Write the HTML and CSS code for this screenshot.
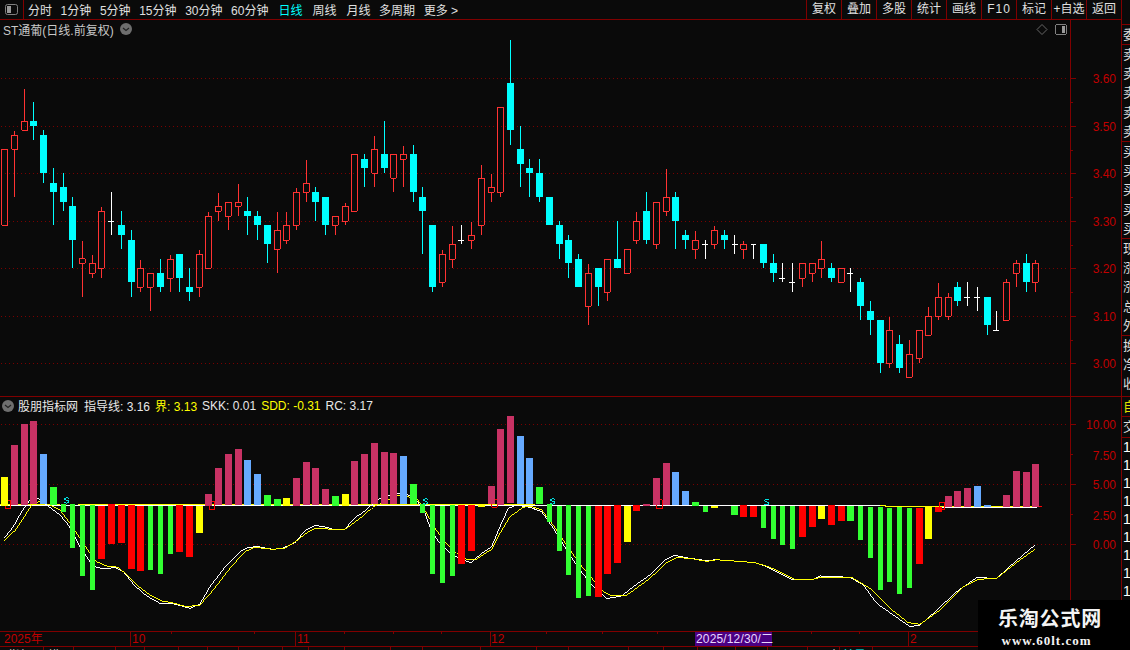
FILE: index.html
```html
<!DOCTYPE html>
<html lang="zh-CN">
<head>
<meta charset="utf-8">
<title>ST通葡</title>
<link rel="stylesheet" href="styles.css">
</head>
<body>
<div class="app">
  <div class="main">
    <header class="toolbar">
      <div class="toggle">
        <svg class="toggle-icon" width="13" height="11" viewBox="0 0 13 11"><rect x="0.5" y="0.5" width="12" height="10" rx="2" class="icon-box"/><rect x="2" y="2" width="4" height="7" class="icon-fill"/></svg>
      </div>
      <nav class="periods">
        <span>分时</span><span>1分钟</span><span>5分钟</span><span>15分钟</span><span>30分钟</span><span>60分钟</span>
        <span class="wide active">日线</span><span class="wide">周线</span><span class="wide">月线</span><span>多周期</span><span>更多 &gt;</span>
      </nav>
      <nav class="actions">
        <span>复权</span><span>叠加</span><span>多股</span><span>统计</span><span>画线</span><span class="spaced">F10</span><span>标记</span><span>+自选</span><span>返回</span>
      </nav>
    </header>

    <section class="panel panel-price">
      <div class="chart-title">
        <span>ST通葡(日线.前复权)</span>
        <svg class="round-icon" width="12" height="12" viewBox="0 0 12 12"><circle cx="6" cy="6" r="6" class="round-bg"/><path d="M3 5l3 2.5L9 5" class="round-mark"/></svg>
      </div>
      <svg class="chart" width="1121" height="376" viewBox="0 20 1121 376">
        <path class="grid" d="M1 78.5H1067M1 126.5H1067M1 173.5H1067M1 221.5H1067M1 268.5H1067M1 316.5H1067M1 363.5H1067"/>
        <path class="axis" d="M1070.5 20V396M1071 78.5h5M1071 126.5h5M1071 173.5h5M1071 221.5h5M1071 268.5h5M1071 316.5h5M1071 363.5h5M1071 102.5h2M1071 150.5h2M1071 197.5h2M1071 245.5h2M1071 292.5h2M1071 340.5h2"/>
        <g class="axis-label">
          <text x="1116" y="83">3.60</text><text x="1116" y="131">3.50</text><text x="1116" y="178">3.40</text><text x="1116" y="226">3.30</text><text x="1116" y="273">3.20</text><text x="1116" y="321">3.10</text><text x="1116" y="368">3.00</text>
        </g>
        <path class="mini-line" d="M1042 24.5l5 5-5 5-5-5z"/>
        <rect x="1055.5" y="24.5" width="11" height="10" rx="2" class="icon-box"/>
        <rect x="1062" y="26" width="3" height="7" class="icon-fill"/>

        <g transform="translate(0.17,40) scale(0.3333)">
          <path class="wick-red" d="M43 274V286M43 328V470M73 148V244M247 603V657M247 670V771M277 645V670M277 700V714M304 502V514M304 685V714M421 660V685M421 742V756M451 742V813M511 645V658M511 715V756M598 630V643M598 742V771M625 516V529M655 459V499M655 514V543M685 529V570M715 432V487M715 499V528M832 516V571M832 628V699M859 516V556M859 601V612M889 444V457M889 556V570M919 360V430M919 457V486M1006 556V585M1036 489V499M1036 544V555"/>
          <path class="body-red" d="M4 328h18V556h-18zM34 286h18V328h-18zM64 244h18V271h-18zM238 657h18V670h-18zM268 670h18V700h-18zM295 514h18V685h-18zM412 685h18V742h-18zM442 700h18V742h-18zM502 658h18V715h-18zM589 643h18V742h-18zM616 529h18V685h-18zM646 499h18V514h-18zM676 487h18V529h-18zM706 487h18V499h-18zM823 571h18V628h-18zM850 556h18V601h-18zM880 457h18V556h-18zM910 430h18V457h-18zM997 529h18V556h-18zM1027 499h18V544h-18zM1054 343h18V514h-18z"/>
          <path class="wick-cyan" d="M100 186V300M130 270V429M160 385V555M190 400V513M217 472V684M364 513V627M394 570V771M481 657V756M538 642V756M568 684V783M742 471V585M772 513V600M802 555V669M946 441V543M976 471V585"/>
          <path class="body-cyan" d="M100 243V258M130 285V399M160 429V456M190 441V486M217 498V600M364 555V585M394 600V726M481 699V741M538 642V714M568 741V756M742 513V528M772 528V555M802 555V612M946 456V486M976 471V555"/>
          <path class="wick-white" d="M334 456V585M325 544h18"/>
        </g>
        <g transform="translate(360.17,30) scale(0.3333)">
          <path class="wick-red" d="M43 318V358M43 430V471M100 445V486M130 348V373M130 388V471M247 660V673M247 757V771M277 588V643M277 688V714M334 576V616M334 631V657M364 405V445M364 586V615M394 432V472M394 487V516M421 487V501M685 702V730M685 829V885M742 787V813M829 546V574M829 631V642M889 643V657M919 417V502M919 544V558M1006 603V631M1006 658V687M1063 588V601M1063 643V657"/>
          <path class="body-red" d="M34 358h18V430h-18zM91 373h18V445h-18zM121 373h18V388h-18zM238 673h18V757h-18zM268 643h18V688h-18zM325 616h18V631h-18zM355 445h18V586h-18zM385 472h18V487h-18zM412 232h18V487h-18zM676 730h18V829h-18zM733 688h18V787h-18zM793 658h18V730h-18zM820 574h18V631h-18zM880 517h18V643h-18zM910 502h18V544h-18zM997 631h18V658h-18zM1054 601h18V643h-18z"/>
          <path class="wick-cyan" d="M13 372V471M73 273V429M160 345V516M187 471V672M217 585V786M451 30V345M481 288V471M508 387V501M538 387V516M598 573V687M625 615V744M655 672V771M715 714V828M772 573V714M859 486V642M946 486V657M976 600V657"/>
          <path class="body-cyan" d="M13 387V414M73 372V414M160 372V486M187 501V543M217 585V771M451 159V300M481 357V402M508 414V429M538 429V501M568 501V585M598 585V642M625 630V699M655 687V771M715 714V771M772 687V714M859 543V630M946 501V573M976 615V630"/>
          <path class="wick-white" d="M304 585V642M295 631h18M1036 630V687M1027 643h18"/>
        </g>
        <g transform="translate(720.17,160) scale(0.3333)">
          <path class="wick-red" d="M70 243V253M70 268V297M247 355V381M277 340V366M304 243V298M304 325V354M508 471V511M508 610V624M568 540V583M598 595V609M625 441V469M655 369V412M655 469V480M685 399V412M685 469V480M859 357V367M889 300V310M889 340V381M946 300V310M946 367V396"/>
          <path class="body-red" d="M61 253h18V268h-18zM238 310h18V355h-18zM268 310h18V340h-18zM295 298h18V325h-18zM355 325h18V367h-18zM499 511h18V610h-18zM559 583h18V652h-18zM589 511h18V595h-18zM616 469h18V526h-18zM646 412h18V469h-18zM676 412h18V469h-18zM850 367h18V481h-18zM880 310h18V340h-18zM937 310h18V367h-18z"/>
          <path class="wick-cyan" d="M13 210V267M130 252V324M160 282V366M334 309V366M421 354V480M451 423V525M481 480V639M538 525V639M712 366V438M802 411V525M919 282V396"/>
          <path class="body-cyan" d="M13 225V240M130 252V309M160 309V339M334 324V354M421 366V438M451 453V480M481 480V609M538 552V624M712 381V423M802 411V495M919 309V366"/>
          <path class="wick-white" d="M43 225V282M34 253h18M100 253V297M91 253h18M187 309V366M178 355h18M217 309V396M208 367h18M391 324V396M382 340h18M742 366V438M733 412h18M772 381V453M763 412h18M829 453V511M820 511h18"/>
        </g>
      </svg>
    </section>

    <section class="panel panel-indicator">
      <div class="legend">
        <svg class="round-icon" width="12" height="12" viewBox="0 0 12 12"><circle cx="6" cy="6" r="6" class="round-bg"/><path d="M3 5l3 2.5L9 5" class="round-mark"/></svg>
        <span class="legend-name">股朋指标网</span>
        <span>指导线: 3.16</span>
        <span class="yellow">界: 3.13</span>
        <span>SKK: 0.01</span>
        <span class="yellow">SDD: -0.31</span>
        <span>RC: 3.17</span>
      </div>
      <svg class="chart" width="1121" height="234" viewBox="0 397 1121 234">
        <path class="grid" d="M1 424.5H1067M1 484.5H1067M1 544.5H1067"/>
        <path class="axis" d="M1070.5 397V631M1071 424.5h5M1071 484.5h5M1071 544.5h5M1071 454.5h2M1071 514.5h2"/>
        <g class="axis-label">
          <text x="1116" y="429">10.00</text><text x="1116" y="460">7.50</text><text x="1116" y="489">5.00</text><text x="1116" y="520">2.50</text><text x="1116" y="549">0.00</text>
        </g>

        <path class="zero-yellow" d="M0 504.5H60M78 504.5H535M700 505.5H885V506.5H1037"/>
        <path class="zero-white" d="M0 505.5H880M940 507.5H1037"/>
        <path class="zero-red" d="M1037 506.5H1042"/>

        <g transform="translate(0,410) scale(0.3333)">
          <polyline class="curve-white" points="12,385 40,350 65,305 90,270 115,265 140,285 180,315 205,345 240,410 270,455 290,472 310,476 345,473 370,485 405,528 440,558 480,580 515,580 545,588 570,595 600,582 630,530 680,465 720,425 745,412 775,410 800,415 820,418 850,414 885,398 915,362 945,346 980,352 1000,358 1035,358 1060,328 1080,312"/>
          <polyline class="curve-yellow" points="12,392 45,362 70,325 95,285 115,275 150,285 180,300 210,340 240,385 270,430 290,455 320,468 355,472 375,490 410,525 450,555 485,573 515,578 560,590 600,585 640,540 690,475 735,425 765,412 820,418 855,414 885,396 925,365 945,355 1000,358 1035,358 1060,340 1080,325"/>
          <path class="mark-red" d="M16 272H32V296H16zM628 274H644V299H628z"/>
          <path class="mark-cyan" d="M208 266Q201 260 195 265Q192 270 201 271Q209 272 207 277Q200 282 193 277"/>
          <path class="bar-magenta" d="M33 105H54V285H33zM63 42H84V285H63zM90 33H111V282H90zM615 252H636V288H615zM645 174H666V285H645zM675 132H696V285H675zM705 117H726V285H705zM879 204H900V288H879zM909 156H930V285H909zM936 174H957V285H936zM966 237H987V285H966zM1053 153H1074V285H1053z"/>
          <path class="bar-blue" d="M120 132H141V282H120zM732 150H753V285H732zM762 192H783V285H762z"/>
          <path class="bar-green" d="M150 231H171V285H150zM183 282H198V306H183zM210 282H225V414H210zM240 285H255V498H240zM270 285H285V540H270zM444 288H459V480H444zM474 288H489V492H474zM504 288H519V432H504zM792 255H813V288H792zM822 267H843V288H822zM996 258H1017V288H996z"/>
          <path class="bar-red" d="M294 288H315V447H294zM324 282H345V402H324zM354 285H375V399H354zM384 285H405V477H384zM411 288H432V483H411zM528 285H549V426H528zM558 288H579V441H558z"/>
          <path class="bar-yellow" d="M3 201H24V288H3zM588 288H609V369H588zM849 264H870V288H849zM1026 252H1047V288H1026z"/>
        </g>
        <g transform="translate(360,410) scale(0.3333)">
          <polyline class="curve-white" points="0,315 35,285 60,265 85,257 115,250 145,255 170,270 195,310 215,365 240,400 270,430 310,450 333,458 365,430 395,410 420,350 445,295 470,285 510,292 545,305 580,355 620,420 660,480 700,530 740,566 785,558 820,530 870,495 915,450 945,436 990,445 1040,452 1080,448"/>
          <polyline class="curve-yellow" points="0,325 40,290 65,280 85,270 115,255 170,265 200,310 225,355 255,395 290,430 320,448 345,450 395,418 420,370 450,320 490,292 510,288 545,300 590,360 630,420 670,475 730,545 755,558 800,556 870,505 920,458 950,443 990,445 1040,454 1080,448"/>
          <path class="mark-red" d="M396 270H412V292H396zM891 270H907V296H891z"/>
          <path class="mark-cyan" d="M204 269Q197 263 191 268Q188 273 197 274Q205 275 203 280Q196 285 189 280M586 269Q579 263 573 268Q570 273 579 274Q587 275 585 280Q578 285 571 280"/>
          <path class="bar-magenta" d="M3 132H24V282H3zM33 99H54V282H33zM63 126H84V282H63zM90 129H111V282H90zM384 228H405V282H384zM411 57H432V285H411zM441 18H462V279H441zM849 282H870V288H849zM879 204H900V285H879zM909 159H930V285H909z"/>
          <path class="bar-blue" d="M120 138H141V282H120zM471 78H492V282H471zM498 144H519V282H498zM936 186H957V285H936zM966 243H987V285H966z"/>
          <path class="bar-green" d="M150 222H171V282H150zM180 282H195V309H180zM210 285H225V492H210zM240 288H255V519H240zM270 285H285V498H270zM528 231H549V282H528zM561 282H576V336H561zM591 288H606V423H591zM618 285H633V495H618zM648 288H663V564H648zM678 288H693V558H678zM996 276H1017V288H996zM1029 288H1044V306H1029z"/>
          <path class="bar-red" d="M294 285H315V462H294zM324 285H345V423H324zM705 288H726V561H705zM732 288H753V492H732zM762 285H783V459H762zM819 285H840V303H819z"/>
          <path class="bar-yellow" d="M354 285H375V291H354zM792 288H813V396H792zM1053 288H1074V294H1053z"/>
        </g>
        <g transform="translate(700,410) scale(0.3333)">
          <polyline class="curve-white" points="60,452 90,452 165,458 200,470 275,508 340,508 360,498 450,502 490,525 530,580 580,615 630,650 660,645 700,610 770,545 830,503 890,505 940,460 1005,405"/>
          <polyline class="curve-yellow" points="60,452 90,452 165,458 210,472 285,508 340,508 360,502 455,502 510,535 570,595 625,638 660,643 720,600 790,530 835,508 890,505 960,450 1005,418"/>
          <path class="mark-red" d="M718 277H734V300H718z"/>
          <path class="mark-cyan" d="M208 271Q201 265 195 270Q192 275 201 276Q209 277 207 282Q200 287 193 282"/>
          <path class="bar-magenta" d="M735 258H756V291H735zM762 243H783V291H762zM792 234H813V291H792zM909 255H930V291H909zM939 183H960V291H939zM969 186H990V291H969zM996 162H1017V291H996z"/>
          <path class="bar-blue" d="M822 228H843V291H822zM852 285H873V291H852z"/>
          <path class="bar-green" d="M93 288H114V315H93zM183 288H198V354H183zM213 288H228V387H213zM240 288H255V405H240zM270 288H285V417H270zM441 288H462V333H441zM474 288H489V390H474zM504 291H519V444H504zM534 291H549V540H534zM561 294H576V516H561zM591 291H606V552H591zM621 294H636V534H621z"/>
          <path class="bar-red" d="M120 285H141V321H120zM150 288H171V321H150zM297 288H318V381H297zM327 288H348V351H327zM384 285H405V345H384zM414 288H435V333H414zM648 294H669V462H648zM705 291H726V306H705z"/>
          <path class="bar-yellow" d="M354 288H375V327H354zM675 291H696V387H675z"/>
        </g>
      </svg>
    </section>

    <section class="date-axis">
      <svg class="chart" width="1121" height="14" viewBox="0 632 1121 14">
        <rect x="695" y="632" width="77" height="14" class="date-mark"/>
        <path class="axis" d="M130.5 632V646M295.5 632V646M490.5 632V646M908.5 632V646M171.5 632v2M254.5 632v2M344.5 632v2M393.5 632v2M441.5 632v2M546.5 632v2M602.5 632v2M657.5 632v2M811.5 632v2M859.5 632v2M1070.5 632V646"/>
        <g class="date-label">
          <text x="4" y="643">2025年</text><text x="132" y="643">10</text><text x="297" y="643">11</text><text x="491" y="643">12</text><text x="910" y="643">2</text>
        </g>
        <text x="696" y="643" class="date-current">2025/12/30/二</text>
      </svg>
    </section>

    <svg class="tabs" width="1121" height="3" viewBox="0 647 1121 3">
      <path class="axis" d="M43.5 647v3M73.5 647v3M115.5 647v3M144.5 647v3M178.5 647v3M207.5 647v3M238.5 647v3M282.5 647v3M308.5 647v3M344.5 647v3M390.5 647v3M422.5 647v3M480.5 647v3M536.5 647v3M568.5 647v3M628.5 647v3M663.5 647v3M697.5 647v3M735.5 647v3M767.5 647v3M807.5 647v3M839.5 647v3M872.5 647v3"/>
      <g class="tab-label">
        <text x="8" y="660">指标</text><text x="48" y="660">模</text><text x="828" y="660">大</text><text x="842" y="660" class="tab-active">单量</text>
      </g>
    </svg>
  </div>

  <aside class="side">
    <div class="side-head"></div>
    <div class="side-row side-single">委比</div>
    <div class="side-group"><span>卖五</span><span>卖四</span><span>卖三</span><span>卖二</span><span>卖一</span></div>
    <div class="side-group"><span>买一</span><span>买二</span><span>买三</span><span>买四</span><span>买五</span></div>
    <div class="side-group"><span>现价</span><span>涨跌</span><span>涨幅</span><span>总量</span><span>外盘</span></div>
    <div class="side-group side-short"><span>换手</span><span>净资</span><span>收益</span></div>
    <div class="side-row side-self">自选</div>
    <div class="side-row side-trade">交易</div>
    <div class="side-list"><span>1</span><span>1</span><span>1</span><span>1</span><span>1</span><span>1</span><span>1</span><span>1</span><span>1</span><span>1</span><span>1</span><span>1</span></div>
  </aside>

  <div class="watermark">
    <div class="wm-title">乐淘公式网</div>
    <div class="wm-url">www.60lt.com</div>
  </div>
</div>
</body>
</html>
```

FILE: styles.css
```css
* { box-sizing: border-box; }
html, body { margin: 0; padding: 0; background: #0a0a0a; }
body { font-family: "Liberation Sans", "Noto Sans CJK SC", sans-serif; font-size: 12px; color: #e0e0e0; }

.app { position: relative; display: flex; width: 1130px; height: 650px; overflow: hidden; background: #0a0a0a; }
.main { display: flex; flex-direction: column; width: 1122px; height: 650px; border-right: 1px solid #800000; }

.toolbar { display: flex; align-items: center; height: 20px; flex: none; border-bottom: 1px solid #800000; }
.toggle { display: flex; align-items: center; justify-content: center; width: 24px; height: 19px; border-right: 1px solid #800000; }
.toggle-icon { display: block; }
.icon-box { fill: none; stroke: #808080; stroke-width: 1; }
.icon-fill { fill: #9a9a9a; }
.periods { display: flex; gap: 8.6px; padding-left: 4px; white-space: nowrap; }
.periods .wide { margin-left: 1.4px; }
.periods .active { color: #00ffff; }
.actions { display: flex; margin-left: auto; }
.actions span { width: 35px; height: 19px; line-height: 19px; text-align: center; border-left: 1px solid #800000; white-space: nowrap; }
.actions .spaced { letter-spacing: 1px; }

.panel { position: relative; flex: none; border-bottom: 1px solid #800000; }
.panel-price { height: 377px; }
.panel-indicator { height: 235px; }
.chart { display: block; shape-rendering: crispEdges; }

.chart-title { position: absolute; left: 3px; top: 0; display: flex; align-items: center; gap: 6px; height: 18px; color: #c8c8c8; white-space: nowrap; }
.round-icon { display: block; flex: none; shape-rendering: auto; }
.round-bg { fill: #6e6e6e; }
.round-mark { fill: none; stroke: #222; stroke-width: 1.2; }

.legend { position: absolute; left: 2px; top: 0; display: flex; align-items: center; gap: 5px; height: 17px; color: #e8e8e8; white-space: nowrap; }
.legend-name { margin: 0 1px 0 -1px; }
.yellow { color: #ffff00; }

.grid { fill: none; stroke: #7a0000; stroke-width: 1; stroke-dasharray: 1 3; }
.axis { fill: none; stroke: #800000; stroke-width: 1; }
.axis-label text { fill: #c00000; font-size: 12px; text-anchor: end; shape-rendering: auto; }
.mini-line { fill: none; stroke: #666; stroke-width: 1; shape-rendering: auto; }

.wick-red { fill: none; stroke: #ff3232; stroke-width: 3; }
.body-red { fill: none; stroke: #ff3232; stroke-width: 3; }
.wick-cyan { fill: none; stroke: #00ffff; stroke-width: 3; }
.body-cyan { fill: none; stroke: #00ffff; stroke-width: 21; }
.wick-white { fill: none; stroke: #ffffff; stroke-width: 3; }

.zero-yellow { fill: none; stroke: #ffff00; stroke-width: 1; }
.zero-white { fill: none; stroke: #ffffff; stroke-width: 1; }
.zero-red { fill: none; stroke: #ff0000; stroke-width: 1; }
.curve-white { fill: none; stroke: #ffffff; stroke-width: 3; }
.curve-yellow { fill: none; stroke: #ffff00; stroke-width: 3; }
.mark-red { fill: none; stroke: #ff0000; stroke-width: 3; }
.mark-cyan { fill: none; stroke: #00e0e0; stroke-width: 3; }
.bar-magenta { fill: #c83264; }
.bar-blue { fill: #66aaff; }
.bar-green { fill: #32ff32; }
.bar-red { fill: #ff0000; }
.bar-yellow { fill: #ffff00; }

.date-axis { flex: none; height: 15px; border-bottom: 1px solid #800000; }
.date-mark { fill: #4b0082; }
.date-label text { fill: #c00000; font-size: 12px; shape-rendering: auto; }
.date-current { fill: #e8d8ff; font-size: 12px; letter-spacing: 0.15px; shape-rendering: auto; }

.tabs { display: block; flex: none; }
.tab-label text { fill: #d0d0d0; font-size: 12px; }
.tab-label .tab-active { fill: #00ffff; }

.side { display: flex; flex-direction: column; width: 8px; height: 650px; overflow: hidden; font-size: 13px; color: #dcdcdc; }
.side-head { flex: none; height: 1px; margin-top: 24px; border-bottom: 1px solid #800000; }
.side-row { flex: none; width: 8px; overflow: hidden; white-space: nowrap; padding-left: 1px; border-bottom: 1px solid #800000; }
.side-single { height: 20px; line-height: 19px; }
.side-group { flex: none; height: 97px; display: flex; flex-direction: column; width: 8px; overflow: hidden; border-bottom: 1px solid #800000; padding-left: 1px; }
.side-group span { height: 19.2px; line-height: 19px; white-space: nowrap; }
.side-short { height: 61px; }
.side-self { height: 20px; line-height: 19px; color: #e0e000; }
.side-trade { height: 21px; line-height: 20px; }
.side-list { display: flex; flex-direction: column; padding-left: 1px; font-size: 14px; color: #ffffff; }
.side-list span { height: 18px; line-height: 18px; }

.watermark { position: absolute; left: 978px; top: 600px; width: 152px; height: 50px; display: flex; flex-direction: column; align-items: center; background: #000; color: #f4f4f4; font-family: "Liberation Serif", "Noto Sans CJK SC", serif; font-weight: bold; }
.wm-title { width: 104px; margin: 7px 0 0 -8px; font-size: 20px; line-height: 24px; letter-spacing: 0.8px; white-space: nowrap; }
.wm-url { margin: 2px 0 0 -15px; font-size: 13px; line-height: 15px; letter-spacing: 1px; white-space: nowrap; }
```
